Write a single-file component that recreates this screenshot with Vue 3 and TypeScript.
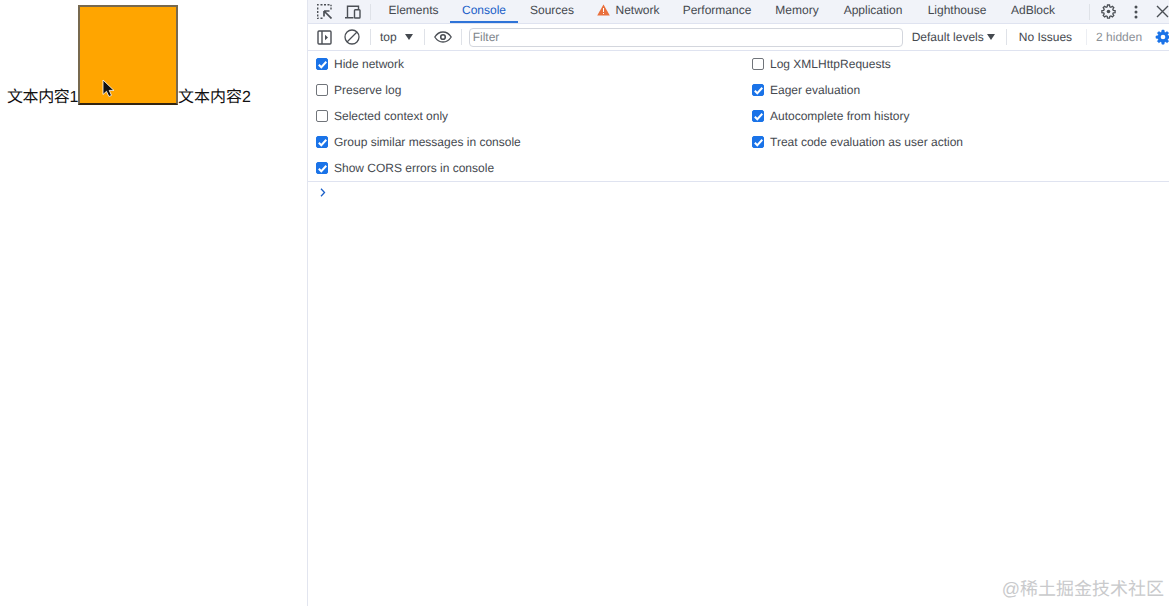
<script setup lang="ts">
interface Tab { name: string; width: number; warn?: boolean; active?: boolean }
const tabs: Tab[] = [
  { name: 'Elements', width: 73 },
  { name: 'Console', width: 68, active: true },
  { name: 'Sources', width: 68 },
  { name: 'Network', width: 85, warn: true },
  { name: 'Performance', width: 92 },
  { name: 'Memory', width: 68 },
  { name: 'Application', width: 84 },
  { name: 'Lighthouse', width: 84 },
  { name: 'AdBlock', width: 68 },
]
const leftOpts = [
  { label: 'Hide network', on: true },
  { label: 'Preserve log', on: false },
  { label: 'Selected context only', on: false },
  { label: 'Group similar messages in console', on: true },
  { label: 'Show CORS errors in console', on: true },
]
const rightOpts = [
  { label: 'Log XMLHttpRequests', on: false },
  { label: 'Eager evaluation', on: true },
  { label: 'Autocomplete from history', on: true },
  { label: 'Treat code evaluation as user action', on: true },
]
const gearPath = 'M8.500 1h-2l-.3 1.800-1.100.5-1.500-1-1.400 1.400 1 1.500-.5 1.100-1.800.3v2l1.800.3.5 1.100-1 1.500 1.400 1.400 1.500-1 1.100.5.3 1.800h2l.3-1.800 1.100-.5 1.500 1 1.400-1.400-1-1.500.5-1.100 1.800-.3v-2l-1.800-.3-.5-1.100 1-1.500-1.400-1.400-1.500 1-1.100-.5z'
</script>

<template>
  <div class="screen">
    <section class="page">
      <span class="before">文本内容1</span><div class="box"></div><span>文本内容2</span>
      <svg class="cursor" width="13" height="19" viewBox="0 0 13 19">
        <path d="M1 1v14.500l3.500-3.200 2.400 5.200 2.600-1.100-2.300-5h4.700z" fill="#111" stroke="#fff" stroke-width="0.800" />
      </svg>
    </section>

    <section class="devtools">
      <header class="tabbar">
        <svg class="ic first" width="15" height="15" viewBox="0 0 15 15" fill="none" stroke="#4b4f55" stroke-width="1.400">
          <path d="M.7 1.500V.7h1M3.500.7h2M7 .7h2M10.500.7h2M14 .7v1.500M14 3.500v2M.7 3.500v2M.7 7v2M.7 10.500v2M.7 14v.3h1M3.500 14.300h2" />
          <path d="M7 7h5.500M7 7v5.500M7 7l7.500 7.500" stroke-width="1.700" />
        </svg>
        <svg class="ic second" width="16" height="14" viewBox="0 0 16 14" fill="none" stroke="#4b4f55" stroke-width="1.400">
          <path d="M0 12.800h8.500M2.500 12.500V1.200h11V4" />
          <rect x="9.500" y="4.700" width="5.500" height="8.300" rx="0.800" />
        </svg>
        <i class="sep tabsep"></i>
        <nav class="tabs">
          <a
            v-for="t in tabs"
            :key="t.name"
            class="tab"
            :class="{ active: t.active }"
            :style="{ width: t.width + 'px' }"
          >
            <svg v-if="t.warn" class="warn" width="13" height="12" viewBox="0 0 13 12">
              <path d="M6.500 0.500l6.300 11H.2z" fill="#e9703d" />
              <path d="M6 4h1v4H6zM6 9h1v1H6z" fill="#fff" />
            </svg>
            {{ t.name }}
          </a>
        </nav>
        <i class="sep endsep"></i>
        <svg class="ic gear" width="15" height="15" viewBox="0 0 15 15" fill="none" stroke="#4b4f55" stroke-width="1.300">
          <path :d="gearPath" />
          <circle cx="7.500" cy="7.500" r="1.800" fill="#4b4f55" stroke="none" />
        </svg>
        <svg class="ic dots" width="4" height="14" viewBox="0 0 4 14" fill="#4b4f55">
          <circle cx="2" cy="2" r="1.500" /><circle cx="2" cy="7" r="1.500" /><circle cx="2" cy="12" r="1.500" />
        </svg>
        <svg class="ic close" width="13" height="13" viewBox="0 0 13 13" stroke="#4b4f55" stroke-width="1.400">
          <path d="M1 1l11 11M12 1L1 12" />
        </svg>
      </header>

      <div class="toolbar">
        <svg class="ic sidebar" width="15" height="15" viewBox="0 0 15 15" fill="none" stroke="#4b4f55" stroke-width="1.400">
          <rect x="1" y="1" width="13" height="13" rx="1" />
          <path d="M5 1v13" />
          <path d="M8 4.800l3 2.700-3 2.700z" fill="#4b4f55" stroke="none" />
        </svg>
        <svg class="ic block" width="16" height="16" viewBox="0 0 16 16" fill="none" stroke="#4b4f55" stroke-width="1.300">
          <circle cx="8" cy="8" r="7" /><path d="M3 13L13 3" />
        </svg>
        <i class="sep s1"></i>
        <span class="ctx">top</span>
        <i class="tri t1"></i>
        <i class="sep s2"></i>
        <svg class="ic eye" width="18" height="12" viewBox="0 0 18 12" fill="none" stroke="#4b4f55" stroke-width="1.300">
          <path d="M.8 6C3 2.500 5.800 1 9 1s6 1.500 8.200 5C15 9.500 12.200 11 9 11S3 9.500.8 6z" />
          <circle cx="9" cy="6" r="2.300" fill="none" stroke-width="1.600" />
        </svg>
        <i class="sep s3"></i>
        <div class="filter">Filter</div>
        <span class="levels">Default levels</span>
        <i class="tri t2"></i>
        <i class="sep s4"></i>
        <span class="issues">No Issues</span>
        <i class="sep s5"></i>
        <span class="hidden">2 hidden</span>
        <svg class="ic bluegear" width="16" height="16" viewBox="0 0 15 15">
          <path :d="gearPath" fill="#1a73e8" stroke="#1a73e8" stroke-width="0.500" />
          <circle cx="7.500" cy="7.500" r="2.200" fill="#fff" />
        </svg>
      </div>

      <div class="settings">
        <div class="col col-left">
          <label v-for="o in leftOpts" :key="o.label" class="opt">
            <span class="cb" :class="{ on: o.on }">
              <svg v-if="o.on" width="13" height="13" viewBox="0 0 13 13" fill="none" stroke="#fff" stroke-width="2"><path d="M2.800 6.700l2.500 2.500 5-5.400" /></svg>
            </span>
            {{ o.label }}
          </label>
        </div>
        <div class="col">
          <label v-for="o in rightOpts" :key="o.label" class="opt">
            <span class="cb" :class="{ on: o.on }">
              <svg v-if="o.on" width="13" height="13" viewBox="0 0 13 13" fill="none" stroke="#fff" stroke-width="2"><path d="M2.800 6.700l2.500 2.500 5-5.400" /></svg>
            </span>
            {{ o.label }}
          </label>
        </div>
      </div>

      <div class="prompt">
        <svg width="6" height="9" viewBox="0 0 6 9" fill="none" stroke="#1a5fc8" stroke-width="1.300"><path d="M1 .8l3.500 3.700L1 8.200" /></svg>
      </div>

      <div class="watermark">@稀土掘金技术社区</div>
    </section>
  </div>
</template>

<style>
html, body { margin: 0; overflow: hidden; background: #fff; }
</style>

<style scoped>
.screen {
  display: flex;
  width: 1169px;
  height: 606px;
  overflow: hidden;
  font-family: "Liberation Sans", "Noto Sans CJK SC", sans-serif;
  text-rendering: geometricPrecision;
}
.page {
  position: relative;
  flex: 0 0 307px;
  box-sizing: border-box;
  padding: 5px 0 0 7px;
  font-size: 16px;
  color: #111;
  white-space: nowrap;
}
.before { letter-spacing: -0.4px; }
.box {
  display: inline-block;
  box-sizing: border-box;
  width: 100px;
  height: 100px;
  vertical-align: -3px;
  background: #ffa500;
  border: 2px solid #77694f;
  border-bottom-color: #32240f;
}
.cursor { position: absolute; left: 102px; top: 79px; }

.devtools {
  position: relative;
  flex: 1;
  min-width: 0;
  border-left: 1px solid #e2e5ef;
  font-size: 12px;
  color: #45494f;
}
.ic { flex: none; display: block; }
.sep { flex: none; width: 1px; height: 16px; background: #dfe2e8; }

.tabbar {
  display: flex;
  align-items: center;
  height: 23px;
  background: #f1f3f9;
  border-bottom: 1px solid #dfe3f0;
}
.first { margin-left: 9px; }
.second { margin-left: 13px; }
.tabsep { margin-left: 9px; }
.tabs { display: flex; margin-left: 6px; height: 23px; }
.tab {
  display: flex;
  align-items: center;
  justify-content: center;
  gap: 5px;
  box-sizing: border-box;
  height: 23px;
  padding-bottom: 3px;
  white-space: nowrap;
}
.tab.active { color: #1a5fc8; border-bottom: 2px solid #2f74d8; padding-bottom: 1px; }
.endsep { margin-left: 22px; }
.gear { margin-left: 11px; }
.dots { margin-left: 18px; }
.close { margin-left: 18px; }

.toolbar {
  display: flex;
  align-items: center;
  height: 26px;
  border-bottom: 1px solid #dfe3f0;
  white-space: nowrap;
}
.sidebar { margin-left: 9px; }
.block { margin-left: 12px; }
.s1 { margin-left: 10px; }
.ctx { margin-left: 9px; }
.tri {
  flex: none;
  width: 0;
  height: 0;
  border-left: 4px solid transparent;
  border-right: 4px solid transparent;
  border-top: 6px solid #45494f;
}
.t1 { margin-left: 8px; }
.s2 { margin-left: 11px; }
.eye { margin-left: 9px; }
.s3 { margin-left: 9px; }
.filter {
  flex: none;
  box-sizing: border-box;
  width: 434px;
  height: 19px;
  margin-left: 7px;
  padding-left: 3px;
  line-height: 17px;
  border: 1px solid #d3d6dd;
  border-radius: 4px;
  color: #80858c;
}
.levels { margin-left: 9px; }
.t2 { margin-left: 3px; }
.s4 { margin-left: 11px; }
.issues { margin-left: 12px; }
.s5 { margin-left: 14px; background: #eceef3; }
.hidden { margin-left: 9px; color: #8b9096; }
.bluegear { margin-left: 13px; }

.settings {
  display: flex;
  box-sizing: border-box;
  height: 131px;
  border-bottom: 1px solid #dfe3f0;
}
.col { display: flex; flex-direction: column; }
.col-left { width: 436px; }
.opt {
  display: flex;
  flex: none;
  align-items: center;
  gap: 6px;
  height: 26px;
  padding-left: 8px;
  white-space: nowrap;
}
.cb {
  flex: none;
  box-sizing: border-box;
  width: 12px;
  height: 12px;
  border: 1px solid #70747a;
  border-radius: 2px;
  background: #fff;
  overflow: hidden;
}
.cb.on { background: #1a73e8; border-color: #1a73e8; }
.cb svg { display: block; margin: -1px; }
.prompt { padding: 6px 0 0 12px; }
.prompt svg { display: block; }
.watermark {
  position: absolute;
  right: 5px;
  bottom: 5px;
  font-size: 18px;
  color: #c9cacc;
  white-space: nowrap;
}
</style>
